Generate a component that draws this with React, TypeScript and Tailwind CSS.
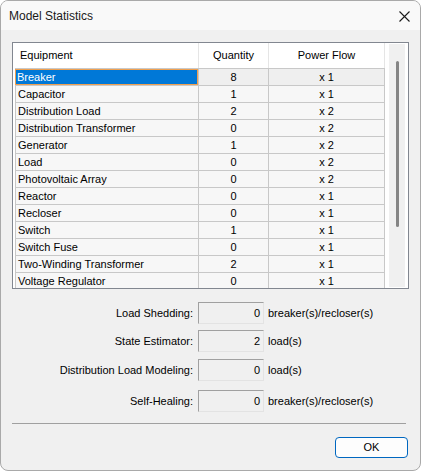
import React from "react";

const rows: [string, string, string][] = [
  ["Breaker", "8", "x 1"],
  ["Capacitor", "1", "x 1"],
  ["Distribution Load", "2", "x 2"],
  ["Distribution Transformer", "0", "x 2"],
  ["Generator", "1", "x 2"],
  ["Load", "0", "x 2"],
  ["Photovoltaic Array", "0", "x 2"],
  ["Reactor", "0", "x 1"],
  ["Recloser", "0", "x 1"],
  ["Switch", "1", "x 1"],
  ["Switch Fuse", "0", "x 1"],
  ["Two-Winding Transformer", "2", "x 1"],
  ["Voltage Regulator", "0", "x 1"],
];

const fields: { label: string; value: string; unit: string; mt: string }[] = [
  { label: "Load Shedding:", value: "0", unit: "breaker(s)/recloser(s)", mt: "mt-[13px]" },
  { label: "State Estimator:", value: "2", unit: "load(s)", mt: "mt-[6px]" },
  { label: "Distribution Load Modeling:", value: "0", unit: "load(s)", mt: "mt-[7px]" },
  { label: "Self-Healing:", value: "0", unit: "breaker(s)/recloser(s)", mt: "mt-[9px]" },
];

export default function App() {
  return (
    <div className="w-[421px] h-[471px] bg-white" style={{ fontFamily: '"Liberation Sans", Arial, sans-serif' }}>
      <div className="w-[421px] h-[471px] border border-[#a9a9a9] rounded-[8px] overflow-hidden bg-[#f0f0f0] flex flex-col text-black">
        {/* Title bar */}
        <div className="h-[29px] shrink-0 bg-[#f9f9f9] flex items-center justify-between pl-[8px] pr-[10px]">
          <span className="text-[12px] text-[#1a1a1a] pt-[1px]">Model Statistics</span>
          <svg width="11" height="11" viewBox="0 0 11 11" className="mt-[1px]">
            <path d="M0.5 0.5 L10.5 10.5 M10.5 0.5 L0.5 10.5" stroke="#1a1a1a" strokeWidth="1.1" fill="none" />
          </svg>
        </div>

        {/* Table frame */}
        <div className="ml-[11px] mt-[12px] w-[397px] h-[247px] shrink-0 border border-[#828790] bg-white flex overflow-hidden">
          <div className="pl-[2px] flex flex-col w-[372px] shrink-0">
            {/* header */}
            <div className="h-[25px] shrink-0 flex text-[11px] items-center">
              <div className="w-[183px] h-full flex items-center pl-[5px]">Equipment</div>
              <div className="w-[70px] h-full flex items-center justify-center border-l border-[#e5e5e5]">Quantity</div>
              <div className="w-[117px] h-full flex items-center justify-center border-l border-r border-[#e5e5e5]">Power Flow</div>
            </div>
            {rows.map((r, i) => (
              <div key={r[0]} className="h-[17px] shrink-0 flex text-[11px] border-t border-[#c8c8c8] w-[370px]">
                {i === 0 ? (
                  <div className="w-[183px] h-full flex items-center bg-[#0078d7] text-white border border-[#f0a050] pl-[1px]">
                    {r[0]}
                  </div>
                ) : (
                  <div className="w-[183px] h-full flex items-center bg-[#f7f7f7] border-l border-[#c8c8c8] pl-[2px]">
                    {r[0]}
                  </div>
                )}
                <div
                  className={`w-[70px] h-full flex items-center justify-center border-l border-[#c8c8c8] ${
                    i === 0 ? "bg-[#efefef]" : "bg-[#f7f7f7]"
                  }`}
                >
                  {r[1]}
                </div>
                <div
                  className={`w-[117px] h-full flex items-center justify-center border-l border-r border-[#c8c8c8] ${
                    i === 0 ? "bg-[#efefef]" : "bg-[#f7f7f7]"
                  }`}
                >
                  {r[2]}
                </div>
              </div>
            ))}
          </div>
          {/* scrollbar */}
          <div className="ml-[4px] mt-[1px] mb-[1px] w-[16px] bg-[#f0f0f0] shrink-0 flex justify-center">
            <div className="mt-[17px] w-[3px] h-[166px] rounded-full bg-[#858585]" />
          </div>
        </div>

        {/* Fields */}
        {fields.map((f) => (
          <div key={f.label} className={`${f.mt} h-[22px] shrink-0 flex items-center text-[11px]`}>
            <div className="w-[192px] text-right">{f.label}</div>
            <div className="ml-[5px] w-[66px] h-[22px] border-t border-l border-[#a0a0a0] border-b border-r border-b-[#e3e3e3] border-r-[#e3e3e3] flex items-center justify-end pr-[3px] bg-[#f0f0f0]">
              {f.value}
            </div>
            <div className="ml-[4px]">{f.unit}</div>
          </div>
        ))}

        {/* Separator */}
        <div className="mt-[11px] ml-[11px] w-[394px] h-[1px] bg-[#a0a0a0] shrink-0" />

        {/* OK */}
        <div className="mt-[13px] flex justify-end pr-[12px]">
          <button className="w-[73px] h-[21px] border border-[#0067c0] rounded-[4px] bg-[#fdfdfd] text-[11px] flex items-center justify-center">
            OK
          </button>
        </div>
      </div>
    </div>
  );
}
